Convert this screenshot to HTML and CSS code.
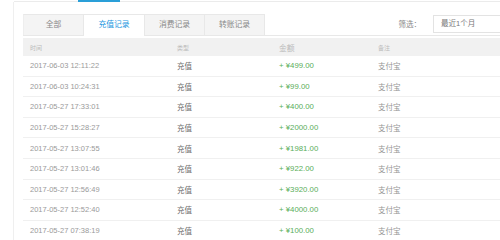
FILE: index.html
```html
<!DOCTYPE html>
<html>
<head>
<meta charset="utf-8">
<link rel="stylesheet" href="styles.css">
</head>
<body>
<div class="topbar"><span class="topbar-active"></span></div>
<div class="panel">
  <div class="tabrow">
    <div class="tabs">
      <div class="tab">全部</div>
      <div class="tab active">充值记录</div>
      <div class="tab">消费记录</div>
      <div class="tab">转账记录</div>
    </div>
    <div class="filter">
      <span class="filter-label">筛选：</span>
      <div class="select">最近1个月</div>
    </div>
  </div>
  <div class="table">
    <div class="row head">
      <div class="c-time">时间</div><div class="c-type">类型</div><div class="c-amt">金额</div><div class="c-note">备注</div>
    </div>
    <div class="row"><div class="c-time">2017-06-03 12:11:22</div><div class="c-type">充值</div><div class="c-amt">+ ¥499.00</div><div class="c-note">支付宝</div></div>
    <div class="row"><div class="c-time">2017-06-03 10:24:31</div><div class="c-type">充值</div><div class="c-amt">+ ¥99.00</div><div class="c-note">支付宝</div></div>
    <div class="row"><div class="c-time">2017-05-27 17:33:01</div><div class="c-type">充值</div><div class="c-amt">+ ¥400.00</div><div class="c-note">支付宝</div></div>
    <div class="row"><div class="c-time">2017-05-27 15:28:27</div><div class="c-type">充值</div><div class="c-amt">+ ¥2000.00</div><div class="c-note">支付宝</div></div>
    <div class="row"><div class="c-time">2017-05-27 13:07:55</div><div class="c-type">充值</div><div class="c-amt">+ ¥1981.00</div><div class="c-note">支付宝</div></div>
    <div class="row"><div class="c-time">2017-05-27 13:01:46</div><div class="c-type">充值</div><div class="c-amt">+ ¥922.00</div><div class="c-note">支付宝</div></div>
    <div class="row"><div class="c-time">2017-05-27 12:56:49</div><div class="c-type">充值</div><div class="c-amt">+ ¥3920.00</div><div class="c-note">支付宝</div></div>
    <div class="row"><div class="c-time">2017-05-27 12:52:40</div><div class="c-type">充值</div><div class="c-amt">+ ¥4000.00</div><div class="c-note">支付宝</div></div>
    <div class="row"><div class="c-time">2017-05-27 07:38:19</div><div class="c-type">充值</div><div class="c-amt">+ ¥100.00</div><div class="c-note">支付宝</div></div>
  </div>
</div>
</body>
</html>
```
FILE: styles.css
```css
html, body {
  margin: 0;
  padding: 0;
  background: #fff;
  overflow: hidden;
  height: 240px;
  font-family: "Liberation Sans", "Noto Sans CJK SC", sans-serif;
  font-size: 7.5px;
}
.topbar {
  height: 1px;
  border-bottom: 1px solid #ebebeb;
  margin-left: 14px;
  position: relative;
}
.topbar-active {
  position: absolute;
  left: 64px;
  top: 0;
  width: 42px;
  height: 2px;
  background: #2a9fd8;
}
.panel {
  margin-left: 13px;
  border-left: 1px solid #efefef;
  padding-left: 9px;
  padding-top: 12px;
  height: 238px;
  box-sizing: border-box;
  overflow: hidden;
}
.tabrow {
  display: flex;
  justify-content: space-between;
  align-items: flex-end;
  border-bottom: 1px solid #e8e8e8;
  height: 21px;
}
.tabs {
  display: flex;
  height: 21px;
}
.tab {
  width: 59px;
  height: 20px;
  line-height: 20px;
  text-align: center;
  background: #f4f4f4;
  border: 1px solid #e8e8e8;
  border-bottom: none;
  border-left: none;
  color: #888;
  font-size: 7.8px;
}
.tab:first-child {
  border-left: 1px solid #eeeeee;
}
.tab.active {
  background: #fff;
  color: #2196e0;
  height: 21px;
  margin-bottom: -1px;
  width: 60px;
}
.filter {
  display: flex;
  align-items: center;
  align-self: center;
  margin-top: -2px;
}
.filter-label {
  color: #888;
  margin-right: 12px;
}
.select {
  width: 78px;
  height: 16px;
  line-height: 16px;
  border: 1px solid #e3e3e3;
  padding-left: 7px;
  color: #777;
  margin-right: -20px;
}
.table {
  margin-top: 2px;
}
.row {
  display: flex;
  height: 20.6px;
  align-items: center;
  border-bottom: 1px solid #f0f0f0;
  box-sizing: border-box;
  padding-left: 7px;
}
.row.head {
  height: 18px;
  background: #f1f1f1;
  border-bottom: none;
  font-size: 6px;
}
.c-time { width: 147px; color: #9a9a9a; }
.c-type { width: 102px; color: #707070; }
.c-amt { width: 99px; color: #5aae5a; font-size: 7.8px; }
.c-note { color: #959595; }
.row.head div { color: #bbbbbb; }
```
